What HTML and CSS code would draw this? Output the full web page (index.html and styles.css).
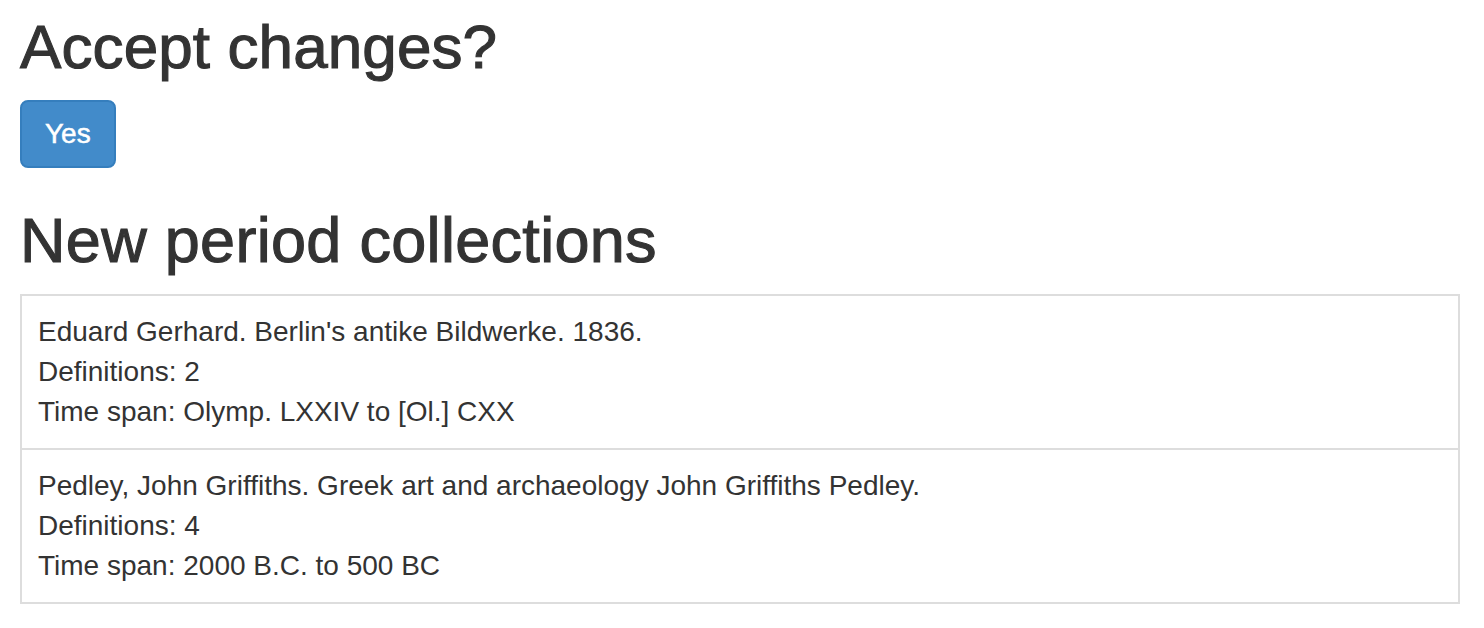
FILE: index.html
```html
<!DOCTYPE html>
<html lang="en">
<head>
<meta charset="utf-8">
<title>Accept changes?</title>
<link rel="stylesheet" href="styles.css">
</head>
<body>
<main class="page">
  <h1 class="title">Accept changes?</h1>
  <button class="btn-primary" type="button">Yes</button>
  <h2 class="title title-section">New period collections</h2>
  <ul class="list-group">
    <li class="list-item">
      <div>Eduard Gerhard. Berlin's antike Bildwerke. 1836.</div>
      <div>Definitions: 2</div>
      <div>Time span: Olymp. LXXIV to [Ol.] CXX</div>
    </li>
    <li class="list-item">
      <div>Pedley, John Griffiths. Greek art and archaeology John Griffiths Pedley.</div>
      <div>Definitions: 4</div>
      <div>Time span: 2000 B.C. to 500 BC</div>
    </li>
  </ul>
</main>
</body>
</html>
```

FILE: styles.css
```css
html, body {
  margin: 0;
  padding: 0;
  background: #fff;
}
body {
  font-family: "Liberation Sans", Arial, Helvetica, sans-serif;
  font-size: 28px;
  line-height: 40px;
  color: #333;
}
.page {
  padding: 0 24px 0 20px;
  display: flex;
  flex-direction: column;
  align-items: flex-start;
}
.title {
  font-size: 62px;
  line-height: 68px;
  font-weight: 400;
  margin: 13px 0 19px;
  color: #333;
  -webkit-text-stroke: 1.1px #333;
  letter-spacing: 0.1px;
}
.title-section {
  margin: 38px 0 20px;
  font-size: 63px;
  letter-spacing: 0.3px;
}
.btn-primary {
  font-family: inherit;
  font-size: 28px;
  line-height: 40px;
  padding: 12px 23px;
  color: #fff;
  background: #428bca;
  border: 2px solid #357ebd;
  border-radius: 8px;
  cursor: pointer;
  -webkit-text-stroke: 0.5px #fff;
}
.list-group {
  list-style: none;
  margin: 0;
  padding: 0;
  align-self: stretch;
  border: 2px solid #ddd;
}
.list-item {
  padding: 16px 16px;
}
.list-item + .list-item {
  border-top: 2px solid #ddd;
}
```
